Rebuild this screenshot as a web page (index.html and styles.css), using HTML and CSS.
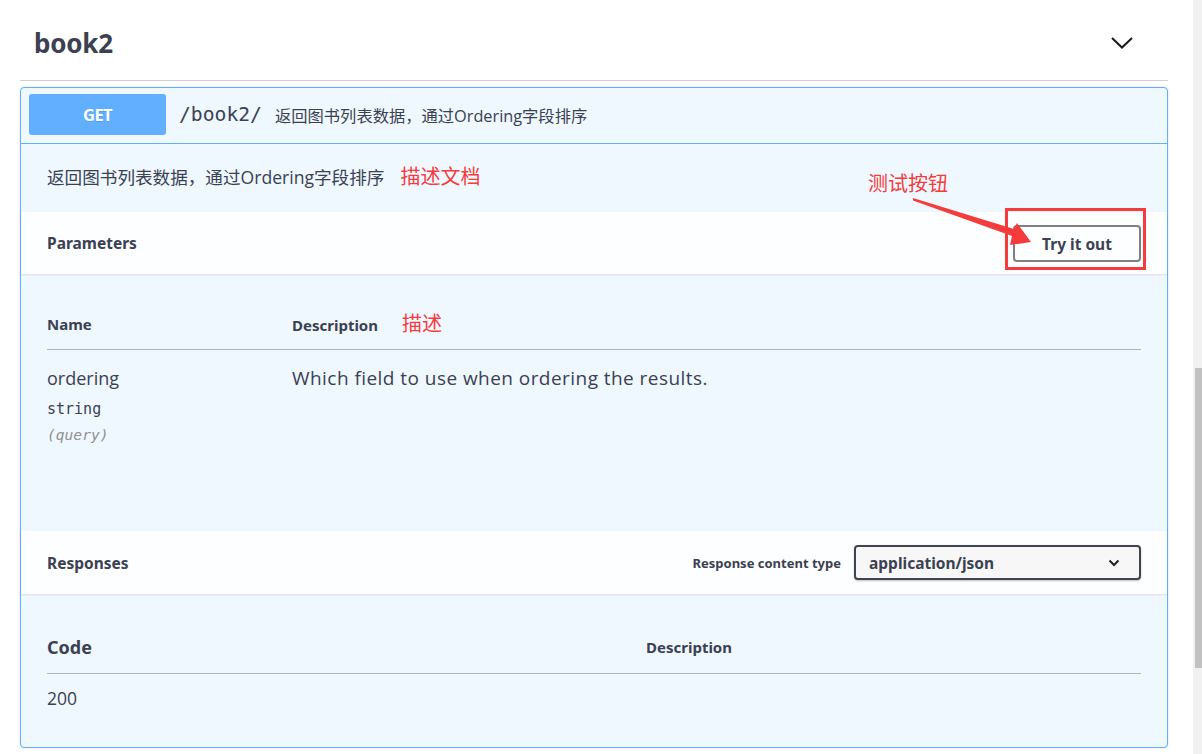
FILE: index.html
```html
<!DOCTYPE html>
<html lang="zh-CN">
<head>
<meta charset="utf-8">
<title>book2</title>
<link rel="stylesheet" href="styles.css">
</head>
<body>
<div class="page">
  <main class="content">
    <section class="tag">
      <h3 class="tag-title">
        <span>book2</span>
        <svg class="tag-chevron" width="22" height="12" viewBox="0 0 22 12"><path d="M1 1 L11 10.5 L21 1" fill="none" stroke="#1a1a1a" stroke-width="2"/></svg>
      </h3>
      <div class="opblock">
        <div class="opblock-summary">
          <span class="method">GET</span>
          <span class="path">/book2/</span>
          <span class="summary-desc">返回图书列表数据，通过Ordering字段排序</span>
        </div>
        <div class="opblock-desc">
          <span class="desc-text">返回图书列表数据，通过Ordering字段排序</span>
          <span class="anno anno-desc">描述文档</span>
        </div>
        <div class="section-header">
          <h4 class="section-title">Parameters</h4>
          <button class="try-out" type="button">Try it out</button>
        </div>
        <div class="table-container params">
          <table class="tbl">
            <thead>
              <tr>
                <th class="col-name">Name</th>
                <th>Description<span class="anno anno-col">描述</span></th>
              </tr>
            </thead>
            <tbody>
              <tr>
                <td class="col-name">
                  <div class="param-name">ordering</div>
                  <div class="param-type">string</div>
                  <div class="param-in">(query)</div>
                </td>
                <td><div class="param-desc">Which field to use when ordering the results.</div></td>
              </tr>
            </tbody>
          </table>
        </div>
        <div class="section-header resp-header">
          <h4 class="section-title">Responses</h4>
          <div class="content-type">
            <span class="ct-label">Response content type</span>
            <div class="select">
              <span>application/json</span>
              <svg width="12" height="8" viewBox="0 0 12 8"><path d="M1.5 1.5 L6 6 L10.5 1.5" fill="none" stroke="#222" stroke-width="2"/></svg>
            </div>
          </div>
        </div>
        <div class="table-container responses">
          <table class="tbl">
            <thead>
              <tr>
                <th class="col-code">Code</th>
                <th class="col-rdesc">Description</th>
              </tr>
            </thead>
            <tbody>
              <tr>
                <td class="code-cell">200</td>
                <td></td>
              </tr>
            </tbody>
          </table>
        </div>
      </div>
    </section>
  </main>
  <div class="scrollbar"><div class="scrollbar-thumb"></div></div>

  <span class="anno anno-btn">测试按钮</span>
  <svg class="overlay" width="1202" height="754" viewBox="0 0 1202 754">
    <rect x="1006.5" y="209.5" width="138" height="59" fill="none" stroke="#f53b3b" stroke-width="3"/>
    <polygon points="913,198 1014,229 1017,223 1031,242 1010,245 1012,236 913,200.5" fill="#f53b3b"/>
  </svg>
</div>
</body>
</html>
```
FILE: styles.css
```css
* { box-sizing: border-box; }
html, body { margin: 0; padding: 0; background: #fff; overflow: hidden; }
body {
  font-family: "Noto Sans", "Noto Sans CJK SC", sans-serif;
  color: #3b4151;
}
.page {
  position: relative;
  display: flex;
  width: 1202px;
  height: 754px;
}
.content {
  flex: 1;
  padding: 0 25px 0 20px;
}
.scrollbar {
  width: 9px;
  background: #f1f1f1;
  padding-top: 368px;
}
.scrollbar-thumb {
  margin-left: 2px;
  height: 300px;
  background: #c1c1c1;
}

/* tag title */
.tag-title {
  margin: 0;
  height: 81px;
  display: flex;
  align-items: center;
  justify-content: space-between;
  padding: 6px 35px 0 14px;
  border-bottom: 1px solid #d2d2d2;
  font-size: 26px;
  font-weight: 700;
  letter-spacing: -0.2px;
  color: #3b4151;
}
.tag-chevron { display: block; }

/* opblock */
.opblock {
  margin-top: 6px;
  border: 1px solid #61affe;
  border-radius: 4px;
  background: #eff7ff;
  box-shadow: 0 0 3px rgba(0,0,0,.12);
}
.opblock-summary {
  height: 56px;
  display: flex;
  align-items: center;
  padding: 0 8px 2px;
  border-bottom: 1px solid #61affe;
}
.method {
  width: 137px;
  height: 41px;
  border-radius: 3px;
  background: #61affe;
  color: #fff;
  font-size: 16.5px;
  font-weight: 700;
  letter-spacing: -0.6px;
  display: flex;
  align-items: center;
  justify-content: center;
  text-shadow: 0 1px 0 rgba(0,0,0,.1);
}
.path {
  margin-left: 13px;
  font-family: "DejaVu Sans Mono", monospace;
  font-size: 19.7px;
  color: #3b4151;
}
.summary-desc {
  margin-left: 13px;
  font-family: "Open Sans", "Noto Sans CJK SC", sans-serif;
  font-size: 16.3px;
  color: #3b4151;
}

.opblock-desc {
  height: 68px;
  display: flex;
  align-items: center;
  padding: 0 26px 4px;
}
.desc-text {
  font-family: "Open Sans", "Noto Sans CJK SC", sans-serif;
  font-size: 17.6px;
}
.anno {
  font-family: "Noto Sans CJK SC", sans-serif;
  font-size: 20px;
  font-weight: 400;
  color: #f53b3b;
  line-height: 24px;
}
.anno-desc { margin-left: 16px; }
.anno-col { margin-left: 24px; line-height: 20px; }
.anno-btn {
  position: absolute;
  left: 868px;
  top: 171px;
}
.overlay {
  position: absolute;
  left: 0;
  top: 0;
  pointer-events: none;
}

/* section headers */
.section-header {
  display: flex;
  align-items: center;
  justify-content: space-between;
  height: 62px;
  padding: 0 26px;
  background: rgba(255,255,255,.8);
  box-shadow: 0 1px 2px rgba(0,0,0,.1);
}
.resp-header { height: 63px; }
.section-title {
  margin: 0;
  font-size: 15.5px;
  font-weight: 700;
  color: #3b4151;
}
.try-out {
  width: 128px;
  height: 37px;
  margin-top: 1px;
  border: 2px solid #808080;
  border-radius: 4px;
  background: transparent;
  font-family: "Noto Sans", sans-serif;
  font-size: 15.5px;
  font-weight: 700;
  color: #3b4151;
  padding: 0;
}
.content-type {
  display: flex;
  align-items: center;
  gap: 13px;
}
.ct-label {
  font-size: 13px;
  font-weight: 700;
}
.select {
  width: 287px;
  height: 35px;
  border: 2px solid #41444e;
  border-radius: 4px;
  background: #f7f7f7;
  box-shadow: 0 1px 2px rgba(0,0,0,.25);
  display: flex;
  align-items: center;
  justify-content: space-between;
  padding: 0 19px 0 13px;
  font-size: 15.5px;
  font-weight: 700;
}
.select svg { display: block; }

/* tables */
.table-container { padding: 25px 26px 0; }
.params { height: 257px; }
.responses { height: 153px; padding-top: 27px; }
.tbl {
  width: 100%;
  border-collapse: collapse;
}
.tbl th {
  text-align: left;
  padding: 14px 0;
  line-height: 20px;
  font-size: 15px;
  font-weight: 700;
  color: #3b4151;
  border-bottom: 1px solid rgba(59,65,81,.2);
  vertical-align: middle;
}
.tbl td {
  padding: 16px 0 0;
  vertical-align: top;
}
.col-name { width: 245px; }
.param-name {
  font-family: "Open Sans", sans-serif;
  font-size: 18px;
  line-height: 24px;
}
.param-type {
  margin-top: 8px;
  font-family: "DejaVu Sans Mono", monospace;
  font-size: 15px;
  line-height: 22px;
}
.param-in {
  margin-top: 4px;
  font-family: "DejaVu Sans Mono", monospace;
  font-size: 14.6px;
  font-style: italic;
  line-height: 22px;
  color: #909090;
}
.param-desc {
  font-family: "Open Sans", sans-serif;
  font-size: 19px;
  letter-spacing: 0.45px;
  line-height: 24px;
}
.responses .tbl th { line-height: 24px; }
.responses .tbl th.col-code { width: 599px; font-size: 18px; }
.tbl td.code-cell {
  padding-top: 12px;
  font-family: "Open Sans", sans-serif;
  font-size: 17.5px;
  line-height: 24px;
}
```
